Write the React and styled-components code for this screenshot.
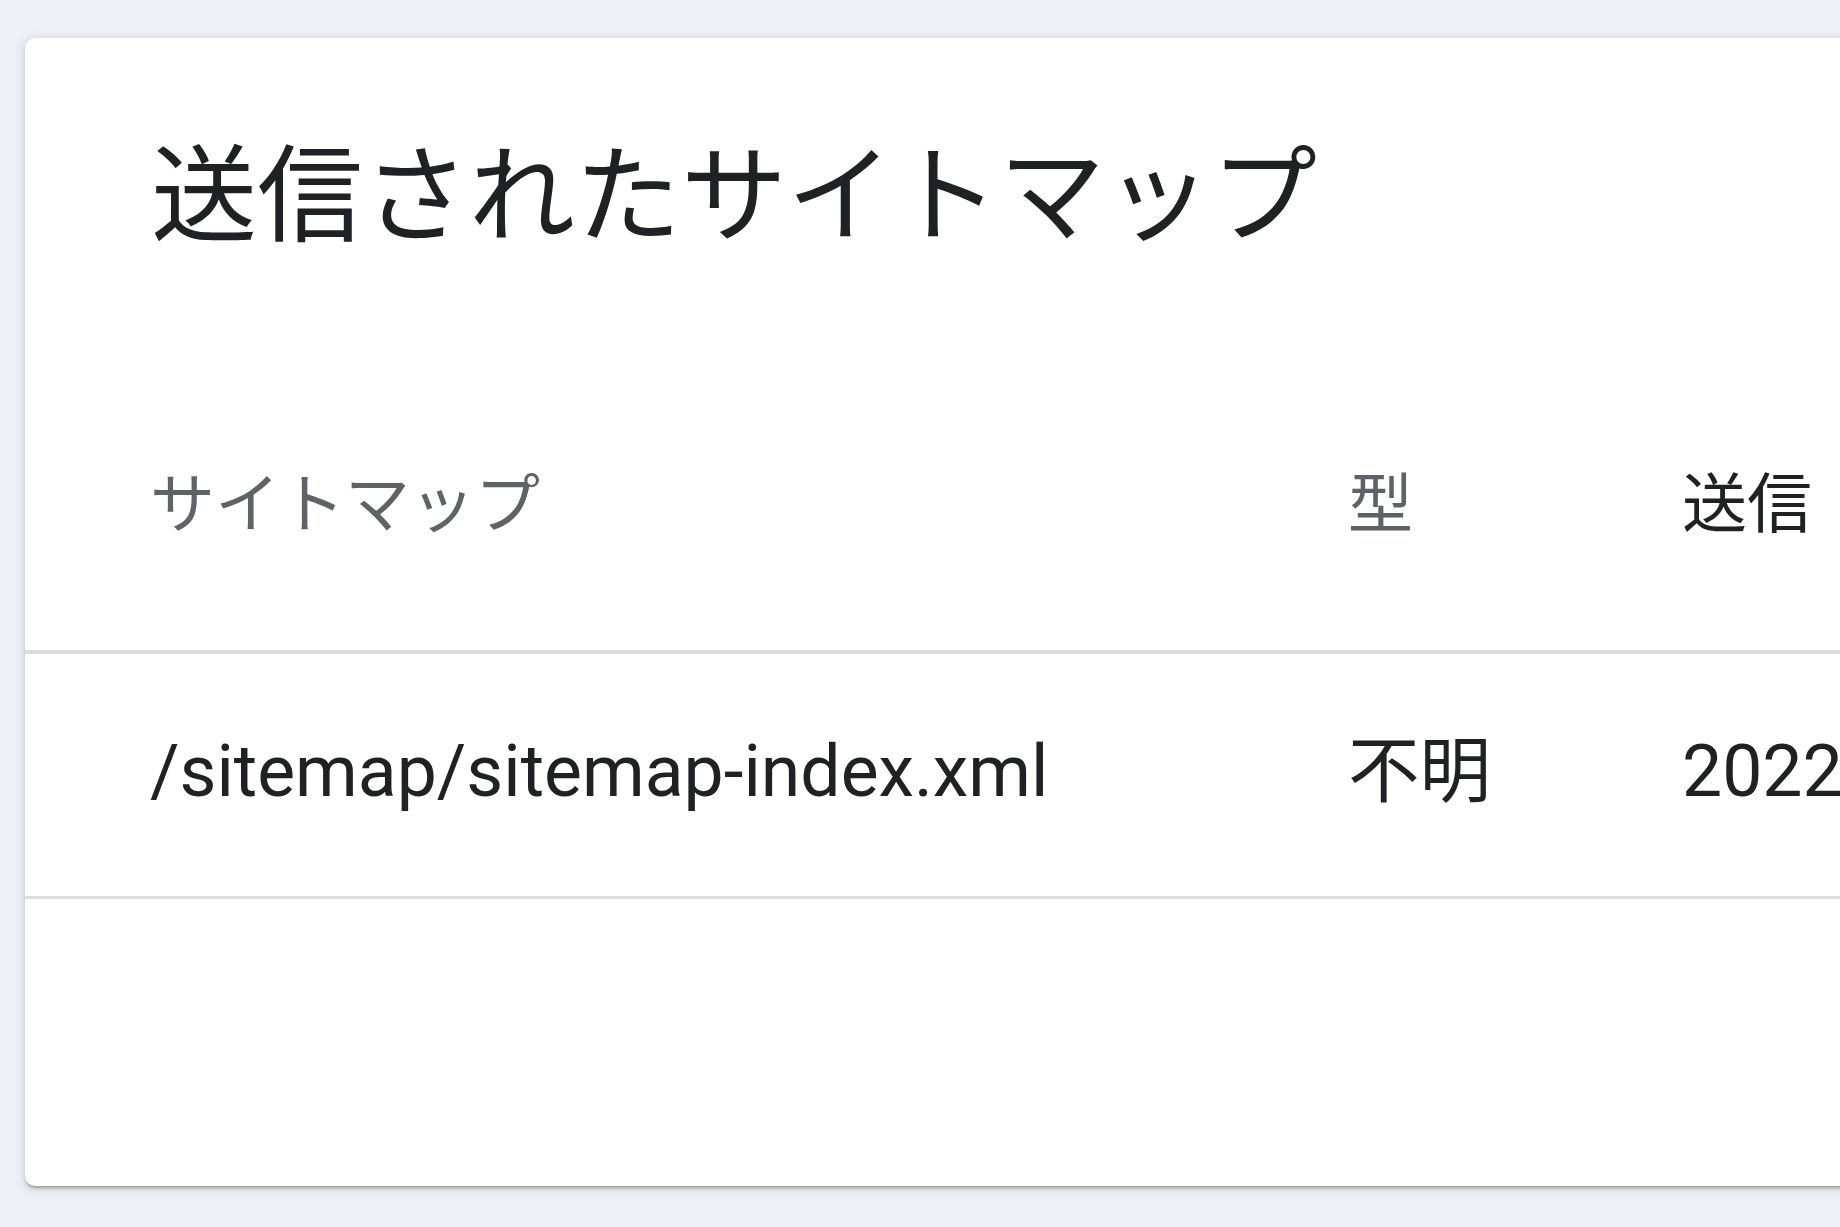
import React from 'react';
import styled, { createGlobalStyle } from 'styled-components';

const GlobalStyle = createGlobalStyle`
  html, body {
    margin: 0;
    padding: 0;
    background: #edf0f4;
    overflow: hidden;
  }
  body {
    font-family: Roboto, "Noto Sans CJK JP", sans-serif;
    color: #202124;
  }
`;

const Page = styled.div`
  width: 1840px;
  height: 1227px;
  padding: 38px 0 0 25px;
  box-sizing: border-box;
  overflow: hidden;
`;

const Card = styled.section`
  width: 2300px;
  height: 1148px;
  background: #fff;
  border-radius: 10px;
  box-shadow: 0 3px 3px -1px rgba(60, 64, 67, 0.4), 0 2px 9px 2px rgba(60, 64, 67, 0.13);
  box-sizing: border-box;
  padding-top: 96px;
`;

const Title = styled.h2`
  margin: 0 0 118px;
  padding-left: 126px;
  font-family: "Noto Sans CJK JP", sans-serif;
  font-weight: 400;
  font-size: 106px;
  line-height: 106px;
  color: #202124;
  white-space: nowrap;
`;

const Row = styled.div`
  display: grid;
  grid-template-columns: 1198px 334px 1fr;
  align-items: center;
  height: ${(p) => p.$height}px;
  padding-left: 125px;
  border-bottom: ${(p) => p.$line}px solid #dadce0;
`;

const HeadCell = styled.div`
  font-family: Roboto, "Noto Sans CJK JP", sans-serif;
  font-size: 65px;
  line-height: 65px;
  color: ${(p) => (p.$active ? '#202124' : '#5f6368')};
  white-space: nowrap;
  margin-top: 3px;
`;

const Cell = styled.div`
  font-family: Roboto, "Noto Sans CJK JP", sans-serif;
  font-size: 71.5px;
  line-height: 72px;
  color: #202124;
  white-space: nowrap;
  margin-top: -7px;
`;

const columns = [
  { label: 'サイトマップ' },
  { label: '型' },
  { label: '送信', active: true },
];

const rows = [
  { path: '/sitemap/sitemap-index.xml', type: '不明', submitted: '2022/08/21' },
];

export default function App() {
  return (
    <>
      <GlobalStyle />
      <Page>
        <Card>
          <Title>送信されたサイトマップ</Title>
          <Row $height={292} $line={4}>
            {columns.map((c) => (
              <HeadCell key={c.label} $active={c.active}>
                {c.label}
              </HeadCell>
            ))}
          </Row>
          {rows.map((r) => (
            <Row key={r.path} $height={242} $line={3}>
              <Cell>{r.path}</Cell>
              <Cell>{r.type}</Cell>
              <Cell>{r.submitted}</Cell>
            </Row>
          ))}
        </Card>
      </Page>
    </>
  );
}
